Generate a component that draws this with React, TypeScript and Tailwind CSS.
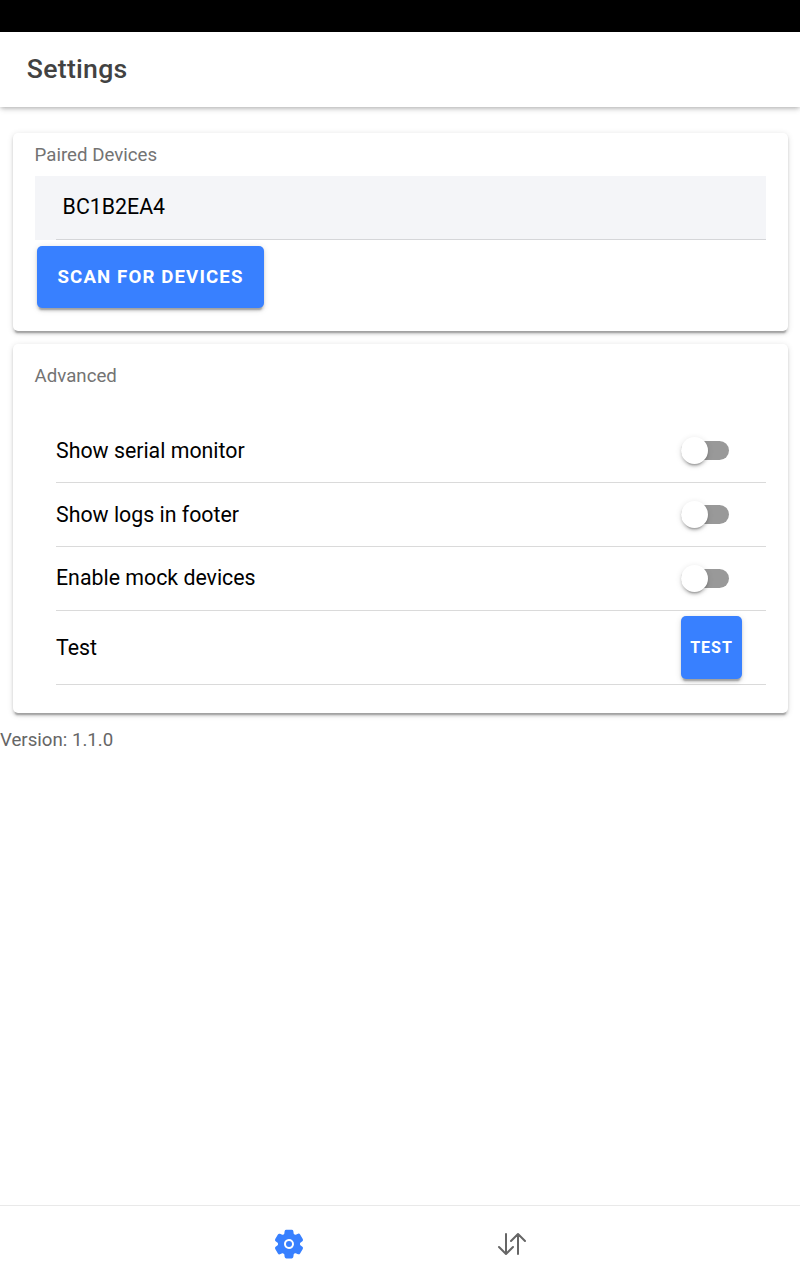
import { IoSettings, IoSwapVertical } from "react-icons/io5";

const raised = "shadow-[0_4px_1.33px_-2.67px_rgba(0,0,0,0.2),0_2.67px_2.67px_0_rgba(0,0,0,0.14),0_1.33px_6.67px_0_rgba(0,0,0,0.12)]";

const toggles = [
  { label: "Show serial monitor", text: "" },
  { label: "Show logs in footer", text: "" },
  { label: "Enable mock devices", text: "pb-[2px]" },
];

function Toggle() {
  return (
    <div className="flex h-7 w-12 items-center">
      <div className="flex h-[19px] w-full items-center rounded-full bg-[#999999]">
        <div className={"size-[27px] shrink-0 rounded-full bg-white " + raised} />
      </div>
    </div>
  );
}

export default function App() {
  return (
    <div className="flex h-[1280px] w-[800px] flex-col overflow-hidden bg-white font-[Roboto,sans-serif]">
      <div className="h-8 shrink-0 bg-black" />
      <header className="z-10 flex h-[75px] shrink-0 items-center bg-white pb-[2px] pl-[26.8px] font-medium text-[#424242] shadow-[0_2.67px_5.33px_-1.33px_rgba(0,0,0,0.2),0_5.33px_6.67px_0_rgba(0,0,0,0.04),0_1.33px_4px_0_rgba(0,0,0,0.12)]">
        <h1 className="text-[26.67px] leading-8 tracking-[0.27px]">Settings</h1>
      </header>
      <main className="flex-1 pt-[26px]">
        <section className={"mr-3 ml-[13px] h-[198px] rounded-[5px] px-[22px] " + raised}>
          <h2 className="-ml-[0.4px] h-[43px] pt-[10px] text-[18.67px] leading-6 text-[#737373]">Paired Devices</h2>
          <div className="h-16 bg-[#f4f5f8] pl-[21px]">
            <div className="flex h-full items-center border-b border-[#d5d6d9] pb-[2px] pl-[6.6px] text-[21.33px]">BC1B2EA4</div>
          </div>
          <button className={"mt-[6px] ml-[2px] h-[62px] w-[227px] rounded-[5px] bg-[#3880ff] text-[18.67px] font-bold tracking-[1.12px] text-white " + raised}>SCAN FOR DEVICES</button>
        </section>
        <section className={"mt-[13px] mr-3 ml-[13px] h-[369px] rounded-[5px] px-[22px] " + raised}>
          <h2 className="-ml-[0.4px] h-[75px] pt-[20px] text-[18.67px] leading-6 text-[#737373]">Advanced</h2>
          {toggles.map(({ label, text }) => (
            <div key={label} className="ml-[21px] flex h-16 items-center justify-between border-b border-[#dadada] pr-[37px] text-[21.33px]">
              <span className={text}>{label}</span>
              <Toggle />
            </div>
          ))}
          <div className="ml-[21px] flex h-[74px] items-center justify-between border-b border-[#dadada] pr-6 text-[21.33px]">
            Test
            <button className={"h-[63px] w-[61px] rounded-[5px] bg-[#3880ff] text-[16px] font-bold tracking-[0.96px] text-white " + raised}>TEST</button>
          </div>
        </section>
        <p className="mt-[15px] text-[18.67px] leading-6 text-[#666666]">Version: 1.1.0</p>
      </main>
      <nav className="flex h-[75px] shrink-0 items-center justify-center gap-[191px] border-t border-[#e9e9e9] pt-[2px]">
        <IoSettings className="size-8 text-[#3880ff]" />
        <IoSwapVertical className="size-8 text-[#666666]" />
      </nav>
    </div>
  );
}
